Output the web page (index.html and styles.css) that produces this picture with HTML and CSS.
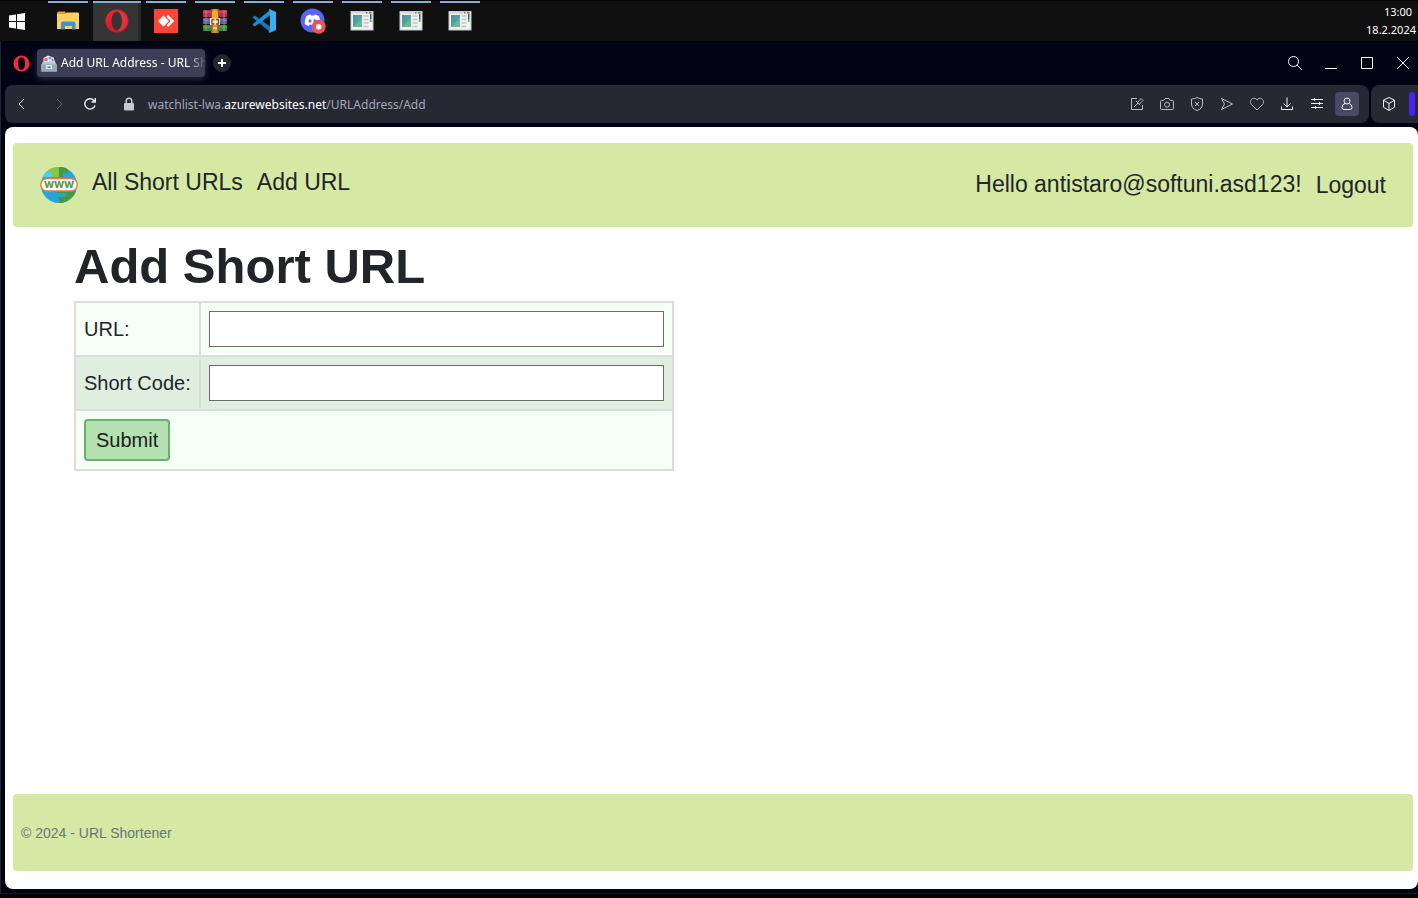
FILE: index.html
```html
<!DOCTYPE html>
<html lang="en">
<head>
<meta charset="utf-8">
<meta name="viewport" content="width=device-width, initial-scale=1">
<title>Add URL Address - URL Shortener</title>
<link rel="stylesheet" href="styles.css">
</head>
<body>
<svg class="defs" width="0" height="0" aria-hidden="true">
  <defs>
    <linearGradient id="g-red" x1="0" y1="0" x2="1" y2="1"><stop offset="0" stop-color="#ee2a35"/><stop offset="1" stop-color="#c4101f"/></linearGradient>
    <linearGradient id="g-pane" x1="0" y1="0" x2="1" y2="1"><stop offset="0" stop-color="#4a8fae"/><stop offset="1" stop-color="#5fb58c"/></linearGradient>
    <symbol id="app-window" viewBox="0 0 24 24">
      <rect x="1" y="2.500" width="22" height="18.500" fill="#f2f2f0" stroke="#c9c9c9"/>
      <path d="M1 3h22v2H1z" fill="#dcdcdc"/><path d="M16 3h1.500v1.500H16zM19 3h2.500v1.500H19z" fill="#777"/>
      <path d="M3 6h9v12H3z" fill="url(#g-pane)"/><path d="M3 18 12 9v9z" fill="#76c58f" opacity=".5"/>
      <path d="M13.500 7h5M13.500 10.500h5M13.500 14h5M13.500 17.500h5" stroke="#c4c4c4" stroke-width="1.500"/>
      <path d="M20 5h1.500v5H20z" fill="#2d5f9a"/><path d="M20 10h1.500v3H20z" fill="#57a86a"/>
    </symbol>
  </defs>
</svg>

<header class="taskbar">
  <button class="start" aria-label="Start"><svg width="16" height="17" viewBox="0 0 16 17" fill="#fff"><path d="M0 2.500 7 1.500V8H0zM8 1.300 16 0v8H8zM0 9h7v6.500l-7-1zM8 9h8v8l-8-1.300z"/></svg></button>
  <button class="task" aria-label="File Explorer"><svg width="24" height="24" viewBox="0 0 24 24"><path d="M1 4q0-1.500 1.500-1.500H9l1.500 2.500H1z" fill="#e0a12a"/><path d="M1 5h8l2-1.500h11q1 0 1 1V20H1z" fill="#fbd25f"/><path d="M5 20.500V14.500q0-2 2-2h10.500q2 0 2 2v6H16V17H9v3.500z" fill="#3f94d3"/></svg></button>
  <button class="task task-active" aria-label="Opera"><svg width="24" height="24" viewBox="0 0 24 24"><path fill="url(#g-red)" fill-rule="evenodd" d="M12 .5a11.500 11.500 0 1 0 0 23 11.500 11.500 0 0 0 0-23zm0 2.200c3.300 0 5 4.200 5 9.300s-1.700 9.300-5 9.300S6.500 17.100 6.500 12 8.700 2.700 12 2.700z"/><path d="M12 2.700c4-2 10.500 2 10.500 9.300S16 23.300 12 21.300c6.500-1 6.500-17.600 0-18.600z" fill="#e8434c" opacity=".6"/></svg></button>
  <button class="task" aria-label="AnyDesk"><svg width="24" height="24" viewBox="0 0 24 24"><path fill="#ff4438" d="M0 0h24v24H0z"/><path fill="#fff" d="m9.500 6.500 5.500 5.500-5.500 5.500L4 12zM12.500 7.800l1.700-1.700L20.200 12l-6 5.900-1.700-1.700L16.700 12z"/></svg></button>
  <button class="task" aria-label="WinRAR"><svg width="24" height="24" viewBox="0 0 24 24"><path d="M0 1h24v7H0z" fill="#bf2853"/><path d="M0 9h24v6H0z" fill="#5559b8"/><path d="M0 16h24v6H0z" fill="#2b8c47"/><path d="M0 3h24M0 11h24M0 18h24" stroke="#fff" stroke-opacity=".25"/><path d="M3 1v21M21 1v21" stroke="#d9b14a" stroke-opacity=".7"/><path d="M8 0h8v24H8z" fill="#9b5527"/><path d="M9.500 0h5v24h-5z" fill="#d98e3a"/><path d="M9 2.500q3-3 6 0V9H9z" fill="#f6a91c"/><path d="M7 9h10v7H7z" fill="#f5e7be"/><path d="M9 10.500h2.500M9 10.500V15h2.500M13 10.500h2.500V15H13" fill="none" stroke="#7d4420" stroke-width="1.300"/><path d="M10 18h4v2h-4z" fill="#f5d36c"/></svg></button>
  <button class="task" aria-label="Visual Studio Code"><svg width="24" height="24" viewBox="0 0 24 24"><path d="M.5 8.500 2.700 6.500 18 17.500V23z" fill="#1479bd"/><path d="M.5 15.500 2.700 17.500 18 6.500V1z" fill="#1b8fd4"/><path d="M17.500 0 24 3v18l-6.500 3-1-1.500 1.500-.5V2l-1.500-.5z" fill="#35aef2"/></svg></button>
  <button class="task" aria-label="Discord"><svg width="26" height="26" viewBox="0 0 26 26"><circle cx="12.500" cy="12.500" r="12" fill="#5865f2"/><path d="M6.500 8q2-1.300 4-1.500l.6 1q1.500-.2 3 0l.6-1q2 .2 4 1.500 2.300 4 2 8-2 1.700-4 2l-1-1.600q-3 .8-6 0l-1 1.600q-2-.3-4-2-.3-4 1.800-8z" fill="#fff"/><ellipse cx="10" cy="13" rx="1.500" ry="1.700" fill="#5865f2"/><ellipse cx="15" cy="13" rx="1.500" ry="1.700" fill="#5865f2"/><circle cx="18.700" cy="18.700" r="7" fill="#ed5257"/><circle cx="18.700" cy="18.700" r="2.800" fill="#fff"/></svg></button>
  <button class="task" aria-label="Application 1"><svg width="24" height="24"><use href="#app-window"/></svg></button>
  <button class="task" aria-label="Application 2"><svg width="24" height="24"><use href="#app-window"/></svg></button>
  <button class="task" aria-label="Application 3"><svg width="24" height="24"><use href="#app-window"/></svg></button>
  <div class="clock"><time>13:00</time><time>18.2.2024</time></div>
</header>

<div class="browser">
  <div class="tabs">
    <button class="menu" aria-label="Opera menu"><svg width="17" height="17" viewBox="0 0 17 17"><path fill="#f5293f" fill-rule="evenodd" d="M8.500.500a8 8 0 1 0 0 16 8 8 0 0 0 0-16zm0 1.700c2.200 0 3.500 2.800 3.500 6.300s-1.300 6.300-3.500 6.300S5 12 5 8.500s1.300-6.300 3.500-6.300z"/></svg></button>
    <button class="tab">
      <svg width="16" height="17" viewBox="0 0 16 17"><path d="M2.500 7V3L7 .5l5.500 2 1.500 4.500z" fill="#e9edf2"/><circle cx="5" cy="4.500" r="1.800" fill="#ed6673"/><circle cx="9" cy="3" r="1.500" fill="#7b9de0"/><circle cx="11.500" cy="5" r="1.200" fill="#bd6fcb"/><path d="m2 6.500 12 0 1.500 3v7H.5v-7z" fill="#b9c6d0"/><path d="M0 9.500h16v7H0z" fill="#96a9b8"/><path d="M5 10h6v4H5z" fill="#dfe7ec"/><path d="M6.500 11.500h3V13h-3z" fill="#607586"/></svg>
      <span class="tab-title">Add URL Address - URL Sh</span>
    </button>
    <button class="new-tab" aria-label="New tab"><svg width="10" height="10" viewBox="0 0 10 10" stroke="#fff" stroke-width="2"><path d="M5 1v8M1 5h8"/></svg></button>
    <div class="window-controls">
      <button aria-label="Search tabs"><svg width="16" height="16" viewBox="0 0 16 16"><circle cx="6.500" cy="6.500" r="5"/><path d="m10 10 5 5"/></svg></button>
      <button aria-label="Minimize"><svg width="16" height="16" viewBox="0 0 16 16"><path d="M2 13.500h12"/></svg></button>
      <button aria-label="Maximize"><svg width="16" height="16" viewBox="0 0 16 16"><path d="M2.500 2.500h11v11h-11z"/></svg></button>
      <button aria-label="Close"><svg width="16" height="16" viewBox="0 0 16 16"><path d="m2 2 12 12M14 2 2 14"/></svg></button>
    </div>
  </div>

  <div class="toolbar">
    <div class="address-bar">
      <button class="nav-button" aria-label="Back"><svg width="16" height="16" viewBox="0 0 16 16"><path d="M10 3 5 8l5 5"/></svg></button>
      <button class="nav-button dim" aria-label="Forward"><svg width="16" height="16" viewBox="0 0 16 16"><path d="m6 3 5 5-5 5"/></svg></button>
      <button class="nav-button reload" aria-label="Reload"><svg width="16" height="16" viewBox="0 0 16 16" stroke-width="1.400"><path d="M13 9.500A5.200 5.200 0 1 1 12 4.500l1 1.200M13.300 2v4H9.500"/></svg></button>
      <svg class="lock" width="12" height="14" viewBox="0 0 12 14"><path d="M3.200 7V4a2.800 2.800 0 0 1 5.600 0v3" fill="none" stroke="#c8cad0" stroke-width="1.500"/><rect x="1" y="6" width="10" height="7.500" rx="1" fill="#c8cad0"/></svg>
      <span class="address">watchlist-lwa.<b>azurewebsites.net</b>/URLAddress/Add</span>
      <div class="tools">
        <button aria-label="Edit"><svg width="16" height="16" viewBox="0 0 16 16"><path d="M8 2.500H2.500v11h11V9M5 11l4-4M7 5l4 4M9 6l3-3.500L14 4.500 10.500 8"/></svg></button>
        <button aria-label="Snapshot"><svg width="16" height="16" viewBox="0 0 16 16"><path d="M2.500 4.500H4.500L6 2.500h4l1.500 2h2q1 0 1 1v7q0 1-1 1h-11q-1 0-1-1v-7q0-1 1-1z"/><circle cx="8" cy="8.700" r="2.500"/></svg></button>
        <button aria-label="Ad blocker"><svg width="16" height="16" viewBox="0 0 16 16"><path d="M8 1.500Q10.500 3 13.500 3v5q0 4.500-5.500 6.500Q2.500 12.500 2.500 8V3Q5.500 3 8 1.500zM6 6l4 4M10 6l-4 4"/></svg></button>
        <button aria-label="Send"><svg width="16" height="16" viewBox="0 0 16 16"><path d="m2.500 2.500 11 5.500-11 5.500L5.500 8z"/></svg></button>
        <button aria-label="Favorite"><svg width="16" height="16" viewBox="0 0 16 16"><path d="M8 14 2.200 8.200C-.5 4.500 4.800-.5 8 4c3.200-4.500 8.500.5 5.800 4.200z"/></svg></button>
        <button class="bright" aria-label="Downloads"><svg width="16" height="16" viewBox="0 0 16 16"><path d="M8 1.500v9M4.500 7.500 8 11l3.500-3.500M2.500 10.500v3h11v-3"/></svg></button>
        <button class="bright" aria-label="Easy setup"><svg width="16" height="16" viewBox="0 0 16 16"><path d="M2 3.500h12M2 7.500h12M2 11.500h12M5.500 2v3M10.500 6v3M6.500 10v3"/></svg></button>
        <button class="bright profile" aria-label="Profile"><svg width="16" height="16" viewBox="0 0 16 16"><circle cx="8" cy="5" r="3"/><path d="M6 7.500q-3 1-3 4 0 2 2 2h6q2 0 2-2 0-3-3-4"/></svg></button>
      </div>
    </div>
    <div class="side-tools">
      <button class="bright" aria-label="Extensions"><svg width="16" height="16" viewBox="0 0 16 16"><path d="m8 1.500 5.500 2.700v7L8 14.500l-5.500-3.300v-7zM2.500 4.200 8 7.500l5.500-3.300M8 7.500v7"/></svg></button>
      <button class="sidebar-handle" aria-label="Open sidebar"></button>
    </div>
  </div>

  <div class="page">
    <nav class="site-nav">
      <a class="logo" href="#" aria-label="Home"><svg width="38" height="38" viewBox="0 0 38 38"><clipPath id="globe"><circle cx="19" cy="19" r="18"/></clipPath><g clip-path="url(#globe)"><path fill="#25a5df" d="M0 0h38v38H0z"/><path d="M8 0h20v7h-5v4H11V7H8z" fill="#8bc63f"/><path d="M19 0h9v7h-5v4h-4z" fill="#45983f"/><path d="M3 6h8q3 1.500 1 5H3z" fill="#4dd0e8"/><path d="M17 25h20v12H19v-5h-2z" fill="#45983f"/><path d="M10 27h15q2 2 0 4H14z" fill="#25a5df"/></g><rect x=".700" y="12.500" width="36.600" height="12.500" rx="6.200" fill="#fff" stroke="#e17b46" stroke-width="1.400"/><g class="logo-text" text-anchor="middle"><text x="9" y="22">w</text><text x="19" y="22">w</text><text x="29" y="22">w</text></g></svg></a>
      <a class="nav-link" href="#">All Short URLs</a>
      <a class="nav-link" href="#">Add URL</a>
      <span class="greeting">Hello antistaro@softuni.asd123!</span>
      <a class="logout" href="#">Logout</a>
    </nav>
    <main>
      <h1>Add Short URL</h1>
      <form>
        <table>
          <tr><td><label for="url">URL:</label></td><td><input id="url" type="text"></td></tr>
          <tr><td><label for="code">Short Code:</label></td><td><input id="code" type="text"></td></tr>
          <tr><td colspan="2"><button class="submit" type="button">Submit</button></td></tr>
        </table>
      </form>
    </main>
    <footer>© 2024 - URL Shortener</footer>
  </div>
</div>
</body>
</html>
```
FILE: styles.css
```css
* { box-sizing: border-box; }
body {
  margin: 0;
  min-height: 100vh;
  display: flex;
  flex-direction: column;
  padding-bottom: 4px;
  background: #000;
  font-family: "Noto Sans", "Open Sans", sans-serif;
  font-size: 12px;
}
button { border: 0; padding: 0; background: none; color: inherit; font: inherit; }
svg { display: block; flex: none; }
.defs { position: absolute; }

.taskbar {
  display: flex;
  gap: 1px;
  height: 41px;
  border-top: 1px solid #000;
  background: #101010;
  color: #fff;
}
.start { width: 43px; padding-left: 9px; }
.task {
  position: relative;
  width: 48px;
  display: flex;
  align-items: center;
  justify-content: center;
}
.task::before {
  content: "";
  position: absolute;
  top: 0;
  left: 4px;
  right: 4px;
  height: 2px;
  background: #84aedb;
}
.task-active { background: linear-gradient(90deg, #353535 45px, #292929 45px); }
.task-active::before { left: 0; right: 0; }
.clock {
  margin-left: auto;
  padding-right: 2px;
  display: flex;
  flex-direction: column;
  align-items: flex-end;
  padding-top: 2px;
  font-size: 11px;
  line-height: 18px;
}
.clock time:first-child { padding-right: 4px; }

.browser {
  flex: 1;
  display: flex;
  flex-direction: column;
  padding: 0 0 4px 4px;
  border-left: 1px solid #22242b;
  border-bottom: 1px solid #17181f;
  background: #000313;
}
.tabs { display: flex; align-items: center; height: 44px; padding-left: 8px; color: #fff; }
.tab {
  width: 168px;
  height: 28px;
  margin: 0 8px 0 7px;
  padding: 0 0 0 4px;
  display: flex;
  align-items: center;
  gap: 4px;
  border-radius: 4px;
  background: #3c3e55;
  box-shadow: 0 2px 6px #2b2d44;
}
.tab-title {
  text-align: left;
  line-height: 18px;
  white-space: nowrap;
  mask-image: linear-gradient(90deg, #000 86%, transparent);
}
.new-tab {
  width: 18px;
  height: 18px;
  display: grid;
  place-items: center;
  border-radius: 50%;
  background: #23252f;
}
.window-controls { margin-left: auto; display: flex; gap: 6px; }
.window-controls button { width: 30px; height: 28px; display: grid; place-items: center; }
.window-controls svg, .nav-button svg, .tools svg, .side-tools svg { fill: none; stroke: currentColor; }

.toolbar { display: flex; gap: 2px; height: 39px; padding-bottom: 1px; color: #b9bcc6; }
.address-bar {
  flex: 1;
  display: flex;
  align-items: center;
  padding: 0 10px 0 9px;
  border-radius: 8px;
  background: #262834;
}
.nav-button { margin-right: 21px; color: #e8e8ec; }
.nav-button.dim { margin-right: 15px; color: #62646f; }
.nav-button.reload { margin-right: 25px; }
.lock { margin-right: 13px; }
.address { color: #a3a7b6; }
.address b { font-weight: 400; color: #fff; }
.tools { margin-left: auto; display: flex; gap: 6px; }
.tools button, .side-tools button { width: 24px; height: 24px; display: grid; place-items: center; }
.bright { color: #f1f1f5; }
.profile { border-radius: 4px; background: #484a63; }
.side-tools {
  display: flex;
  align-items: center;
  gap: 8px;
  padding: 0 3px 0 6px;
  border-radius: 8px 0 0 8px;
  background: #262834;
}
.side-tools .sidebar-handle { width: 6px; border-radius: 3px; background: #4a22f0; }

.page {
  flex: 1;
  display: flex;
  flex-direction: column;
  margin-top: 3px;
  padding: 16px 5px 18px 8px;
  border-radius: 8px;
  background: #fff;
  color: #212529;
  font-family: "Liberation Sans", Arial, sans-serif;
  font-size: 20px;
}
.site-nav {
  display: flex;
  align-items: center;
  gap: 14px;
  min-height: 84px;
  padding: 0 27px;
  border-radius: 4px;
  background: #d5e8a4;
  font-size: 23px;
  line-height: 30px;
}
.site-nav a { color: inherit; text-decoration: none; }
.logo-text { font-family: Inter, sans-serif; font-size: 12px; font-weight: 700; fill: #579b48; }
.nav-link { padding-bottom: 6px; }
.greeting { margin-left: auto; padding-bottom: 2px; }
main { padding: 11px 61px 10px; }
h1 { margin: 0 0 7px; font-size: 49px; line-height: 56px; }
table { width: 600px; max-width: 100%; border-collapse: collapse; background: #f5fff6; }
td { padding: 8px; border: 2px solid #dadeda; white-space: nowrap; }
td:last-child { width: 100%; }
tr:nth-child(2) { background: #dfeedf; }
input {
  display: block;
  width: 100%;
  height: 36px;
  padding: 2px 4px;
  border: 1px solid #6b6b6b;
  background: #fff;
  font: inherit;
}
.submit {
  display: block;
  height: 42px;
  padding: 0 10px;
  border: 2px solid #68b26c;
  border-radius: 4px;
  background: #b5e0b2;
  color: #17231a;
}
footer {
  margin-top: auto;
  padding: 31px 8px 29px;
  border-radius: 4px;
  background: #d5e8a4;
  color: #6c757d;
  font-size: 14px;
  line-height: 17px;
}
```
